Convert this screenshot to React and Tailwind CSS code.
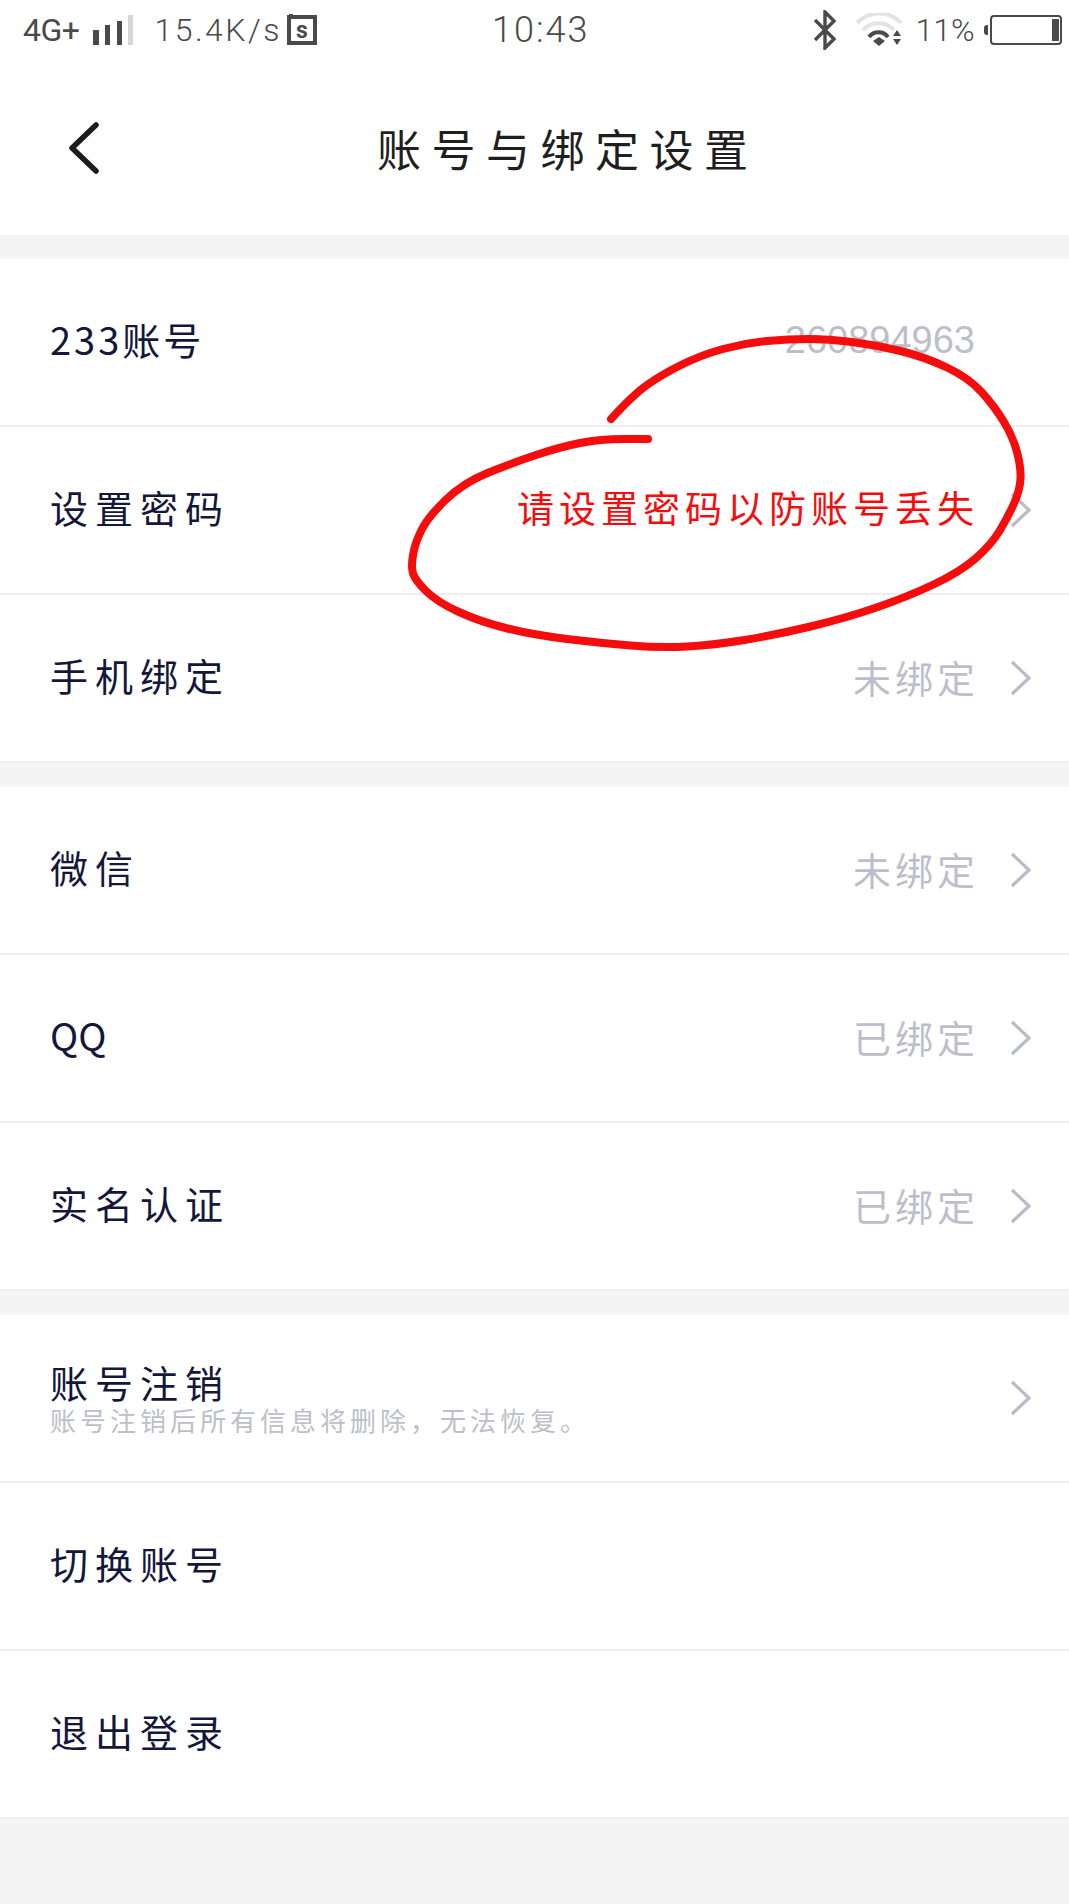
const cjk = "font-['Noto_Sans_CJK_SC','Noto_Sans',sans-serif]"

// red hand-drawn circle, points read off the screenshot
const scribble = [
  [611, 419], [633, 395], [661, 375], [701, 355], [745, 343], [789, 339], [828, 339], [876, 345],
  [925, 357], [969, 378], [995, 407], [1013, 437], [1021, 467], [1020, 490], [1008, 517], [991, 545],
  [960, 572], [907, 597], [846, 618], [775, 635], [714, 645], [661, 648], [600, 643], [534, 635],
  [481, 622], [437, 602], [415, 580], [411, 567], [415, 543], [428, 517], [463, 483], [512, 463],
  [560, 447], [600, 439], [648, 439],
]

function smoothPath(points) {
  let d = `M${points[0][0]} ${points[0][1]}`
  for (let i = 1; i < points.length - 1; i++) {
    const mx = (points[i][0] + points[i + 1][0]) / 2
    const my = (points[i][1] + points[i + 1][1]) / 2
    d += ` Q${points[i][0]} ${points[i][1]} ${mx} ${my}`
  }
  const last = points[points.length - 1]
  return d + ` L${last[0]} ${last[1]}`
}

function Chevron() {
  return (
    <svg width="24" height="36" viewBox="0 0 24 36" fill="none" className="ml-[30px] shrink-0">
      <path d="M3 2l17 16L3 34" stroke="#b9bcc7" strokeWidth="3.2" />
    </svg>
  )
}

function Row({ label, value, arrow = true, sub, red, spacing = 'tracking-[7px]' }) {
  return (
    <div className="flex h-[168px] items-center border-b-2 border-[#eeeeee] bg-white pl-[50px] pr-[36px]">
      <div className="flex-1">
        <div className={`text-[38px] leading-[42px] text-[#14163a] ${spacing} ${sub ? '' : 'mb-[6px]'} ${cjk}`}>
          {label}
        </div>
        {sub && (
          <div className={`mt-[2px] text-[26px] leading-[30px] tracking-[4px] text-[#bcbfc9] ${cjk}`}>{sub}</div>
        )}
      </div>
      {value && (
        <div className={`mb-[4px] text-[38px] tracking-[4px] text-[#bcbfc9] ${cjk}`}>{value}</div>
      )}
      {red && <div className={`mb-[4px] text-[37px] tracking-[5px] text-[#f50c0c] ${cjk}`}>{red}</div>}
      {arrow && <Chevron />}
    </div>
  )
}

function StatusBar() {
  return (
    <div className="flex h-[60px] items-center pl-[23px] text-[#4a4a4a] font-['Roboto',sans-serif]">
      <span className="text-[32px] tracking-[-0.5px]">4G+</span>
      <svg width="42" height="30" viewBox="0 0 42 30" className="ml-[13px]">
        <rect x="1" y="15" width="6" height="15" fill="#4a4a4a" />
        <rect x="13" y="10" width="5" height="20" fill="#4a4a4a" />
        <rect x="25" y="6" width="5" height="24" fill="#4a4a4a" />
        <rect x="36" y="0" width="5" height="30" fill="#d6d6d6" />
      </svg>
      <span className="ml-[20px] text-[32px] font-light tracking-[2.5px]">15.4K/s</span>
      <svg width="30" height="32" viewBox="0 0 30 32" className="ml-[5px]">
        <path d="M2 3h26v26H2zM4 0v3" fill="none" stroke="#4a4a4a" strokeWidth="4" />
        <text x="15" y="24" textAnchor="middle" fontSize="23" fontWeight="700" fill="#4a4a4a" fontFamily="Roboto">s</text>
      </svg>
      <span className="ml-[175px] text-[36px] font-light tracking-[2px]">10:43</span>
      <svg width="24" height="40" viewBox="0 0 24 40" className="ml-[224px]">
        <path d="M2 10l19 19-9 9V2l9 9L2 30" fill="none" stroke="#4a4a4a" strokeWidth="3.4" />
      </svg>
      <svg width="48" height="34" viewBox="0 0 48 34" className="ml-[19px]">
        <path d="M1 10a30 30 0 0 1 44 0" fill="none" stroke="#e3e3e3" strokeWidth="4" />
        <path d="M7 17a21 21 0 0 1 31 0" fill="none" stroke="#e3e3e3" strokeWidth="4" />
        <path d="M13 24a12 12 0 0 1 19 0" fill="none" stroke="#4a4a4a" strokeWidth="4" />
        <path d="M17 28l6-4 6 4-6 5z" fill="#4a4a4a" />
        <path d="M37 23l4-6 4 6zM37 26h8l-4 6z" fill="#4a4a4a" />
      </svg>
      <span className="ml-[11px] text-[32px] font-light">11%</span>
      <div className="ml-[9px] h-[10px] w-[4px] rounded-l-[3px] bg-[#4a4a4a]" />
      <div className="ml-[2px] flex h-[30px] w-[72px] items-center justify-end rounded-[4px] border-2 border-[#4a4a4a] pr-[1px]">
        <div className="h-[22px] w-[7px] bg-[#4a4a4a]" />
      </div>
    </div>
  )
}

export default function App() {
  return (
    <div className="relative min-h-[1904px] bg-[#f4f4f4]">
      <div className="bg-white">
        <StatusBar />
        <div className="flex h-[175px] items-center pl-[68px]">
          <svg width="32" height="52" viewBox="0 0 32 52" fill="none">
            <path d="M28 3L4 26l24 23" stroke="#1c1c1c" strokeWidth="5.5" strokeLinecap="round" strokeLinejoin="round" />
          </svg>
          <h1 className={`ml-[277px] text-[44px] leading-none tracking-[10.5px] text-[#1f1f1f] ${cjk}`}>账号与绑定设置</h1>
        </div>
      </div>

      <div className="mt-[24px]">
        <Row
          label="233账号"
          spacing="tracking-[3px]"
          arrow={false}
          value={<span className="block pr-[58px] font-['Liberation_Sans',sans-serif] text-[38px] tracking-normal">260894963</span>}
        />
        <Row label="设置密码" red="请设置密码以防账号丢失" />
        <Row label="手机绑定" value="未绑定" />
      </div>

      <div className="mt-[24px]">
        <Row label="微信" value="未绑定" />
        <Row label="QQ" value="已绑定" spacing="tracking-normal" />
        <Row label="实名认证" value="已绑定" />
      </div>

      <div className="mt-[24px]">
        <Row label="账号注销" sub="账号注销后所有信息将删除，无法恢复。" />
        <Row label="切换账号" arrow={false} />
        <Row label="退出登录" arrow={false} />
      </div>

      {/* annotation drawn on top of the screenshot */}
      <svg width="1069" height="1904" viewBox="0 0 1069 1904" fill="none" className="pointer-events-none absolute left-0 top-0">
        <path d={smoothPath(scribble)} stroke="#f50c0c" strokeWidth="8" strokeLinecap="round" strokeLinejoin="round" />
      </svg>
    </div>
  )
}
